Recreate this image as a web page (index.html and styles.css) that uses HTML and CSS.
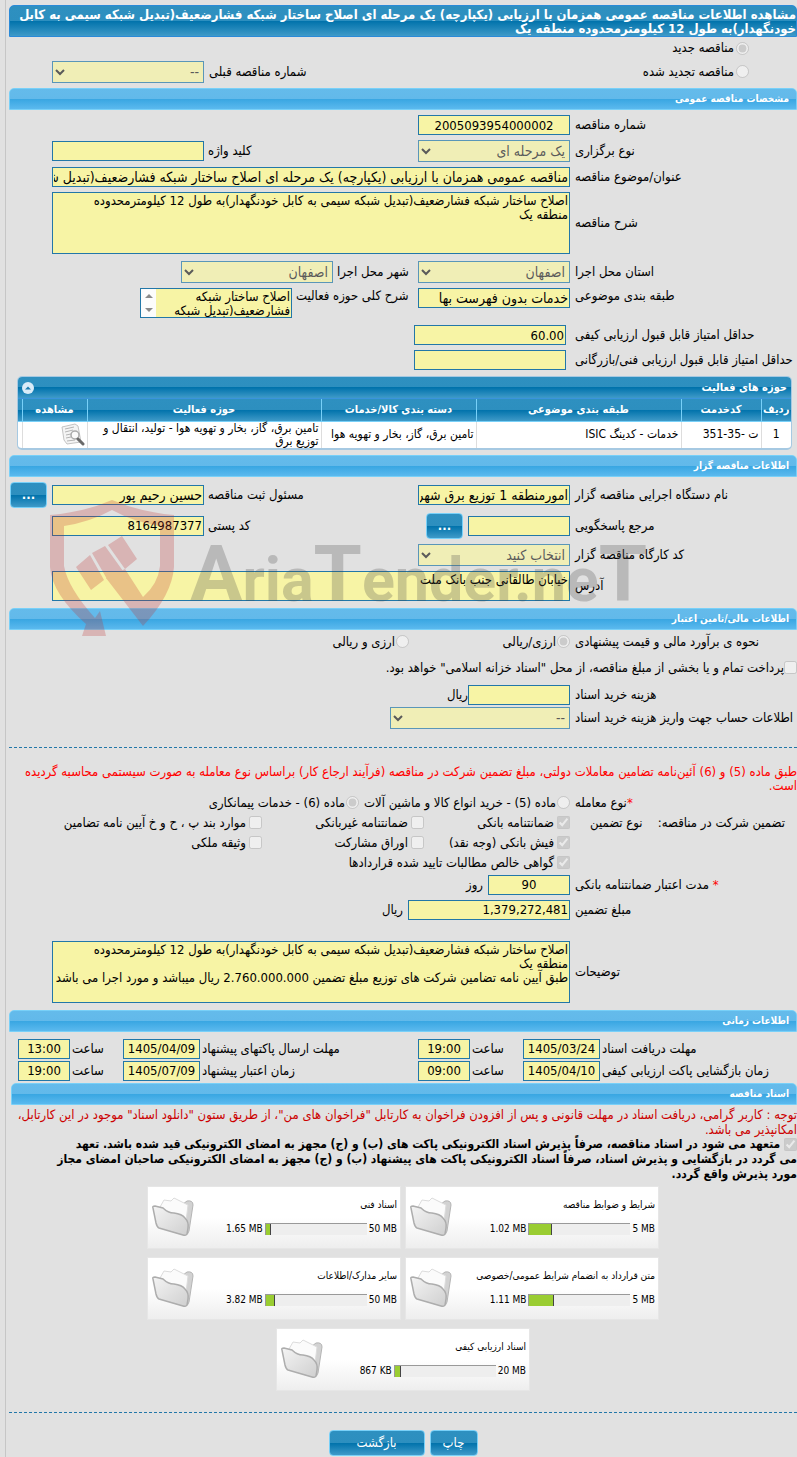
FILE: index.html
```html
<!DOCTYPE html>
<html lang="fa" dir="rtl">
<head>
    <meta charset="UTF-8">
    <meta name="viewport" content="width=device-width, initial-scale=1.0">
    <title>مشاهده اطلاعات مناقصه عمومی</title>
    <link rel="stylesheet" href="styles.css">
</head>
<body>
    <svg width="0" height="0" class="defs">
        <defs>
            <linearGradient id="flap" x1="0" y1="0" x2="1" y2="1">
                <stop offset="0" stop-color="#f4f4f4"/>
                <stop offset="1" stop-color="#cfcfcf"/>
            </linearGradient>
            <symbol id="folder" viewBox="0 0 44 40">
                <path d="M20 12 L32 7 L36 4 Q42 3 42 8 L38 34 Q37 38 34 38 L30 30 Z" fill="#d2d2d2" stroke="#b5b5b5"/>
                <path d="M9 10 L13 3 L20 4 L23 1 L37 8 L34 33 L13 28 Z" fill="#fbfbfb" stroke="#dcdcdc"/>
                <path d="M2 11 Q1 9 4 9 L12 11 Q17 16 23 16 Q31 17 34 21 Q38 25 37 31 L36 37 Q35 39 32 38 L8 31 Q6 30 5 26 Z" fill="url(#flap)" stroke="#adadad" stroke-width="1.500"/>
            </symbol>
        </defs>
    </svg>

    <main class="page">
        <h1 class="page-title">مشاهده اطلاعات مناقصه عمومی همزمان با ارزیابی (یکپارچه) یک مرحله ای اصلاح ساختار شبکه فشارضعیف(تبدیل شبکه سیمی به کابل<br>خودنگهدار)به طول 12 کیلومترمحدوده منطقه یک</h1>

        <div class="row kind">
            <input type="radio" id="kindNew" name="kind" checked disabled><label for="kindNew">مناقصه جدید</label>
        </div>
        <div class="row kind">
            <div class="kind-cell"><input type="radio" id="kindRenew" name="kind" disabled><label for="kindRenew">مناقصه تجدید شده</label></div>
            <label class="lbl2" for="prevNo">شماره مناقصه قبلی</label>
            <select id="prevNo" class="field" disabled><option>--</option></select>
        </div>

        <h2 class="bar">مشخصات مناقصه عمومی</h2>
        <div class="row">
            <label class="lbl" for="tenderNo">شماره مناقصه</label>
            <input type="text" id="tenderNo" class="field center" value="2005093954000002" readonly>
        </div>
        <div class="row">
            <label class="lbl" for="holdType">نوع برگزاری</label>
            <select id="holdType" class="field" disabled><option>یک مرحله ای</option></select>
            <label class="lbl2" for="keyword">کلید واژه</label>
            <input type="text" id="keyword" class="field" readonly>
        </div>
        <div class="row">
            <label class="lbl" for="subject">عنوان/موضوع مناقصه</label>
            <input type="text" id="subject" class="wide fa" value="مناقصه عمومی همزمان با ارزیابی (یکپارچه) یک مرحله ای اصلاح ساختار شبکه فشارضعیف(تبدیل شبکه سیمی به کابل خودنگهدار)" readonly>
        </div>
        <div class="row after-area">
            <label class="lbl" for="desc">شرح مناقصه</label>
            <textarea id="desc" class="wide tall" readonly>اصلاح ساختار شبکه فشارضعیف(تبدیل شبکه سیمی به کابل خودنگهدار)به طول 12 کیلومترمحدوده
منطقه یک</textarea>
        </div>
        <div class="row">
            <label class="lbl" for="province">استان محل اجرا</label>
            <select id="province" class="field" disabled><option>اصفهان</option></select>
            <label class="lbl2 city-label" for="city">شهر محل اجرا</label>
            <select id="city" class="field" disabled><option>اصفهان</option></select>
        </div>
        <div class="row top after-area">
            <label class="lbl" for="category">طبقه بندی موضوعی</label>
            <input type="text" id="category" class="field fa" value="خدمات بدون فهرست بها" readonly>
            <label class="lbl2 scope-label" for="scope">شرح کلی حوزه فعالیت</label>
            <div class="field scroll-box">
                <textarea id="scope" readonly>اصلاح ساختار شبکه
فشارضعیف(تبدیل شبکه
سیمی به کابل خودنگهدار)</textarea>
                <svg width="15" height="28" viewBox="0 0 15 28"><rect width="15" height="28" fill="#fcfcfc"/><path d="M4 9 L8 5 L12 9 Z M4 19 L8 23 L12 19 Z" fill="#8a8a8a"/></svg>
            </div>
        </div>
        <div class="row score">
            <label class="lbl" for="minQuality">حداقل امتیاز قابل قبول ارزیابی کیفی</label>
            <input type="text" id="minQuality" class="field" value="60.00" readonly>
        </div>
        <div class="row score">
            <label class="lbl" for="minTech">حداقل امتیاز قابل قبول ارزیابی فنی/بازرگانی</label>
            <input type="text" id="minTech" class="field" readonly>
        </div>

        <div class="grid-box">
            <div class="grid-title">
                <span>حوزه های فعالیت</span>
                <svg width="12" height="12" viewBox="0 0 12 12"><circle cx="6" cy="6" r="6" fill="#d9ebf8"/><path d="M3 7.500 L6 4.500 L9 7.500 Z" fill="#1a7cb0"/></svg>
            </div>
            <table>
                <colgroup><col class="c-no"><col class="c-code"><col class="c-cat"><col class="c-goods"><col class="c-area"><col class="c-view"><col class="c-pad"></colgroup>
                <thead>
                    <tr><th>ردیف</th><th>کدخدمت</th><th>طبقه بندی موضوعی</th><th>دسته بندی کالا/خدمات</th><th>حوزه فعالیت</th><th>مشاهده</th><th></th></tr>
                </thead>
                <tbody>
                    <tr>
                        <td class="center">1</td>
                        <td>ت -35-351</td>
                        <td>خدمات - کدینگ ISIC</td>
                        <td>تامین برق، گاز، بخار و تهویه هوا</td>
                        <td>تامین برق، گاز، بخار و تهویه هوا - تولید، انتقال و توزیع برق</td>
                        <td><svg class="view" width="24" height="24" viewBox="0 0 24 24">
                            <path d="M1 4 L14 1 L17 3 L20 19 L6 21 L3 17 Z" fill="#f4f4f4" stroke="#c4c4c4"/>
                            <path d="M4 6 L13 4 M4 9 L12 7 M5 12 L10 11 M5 15 L10 14 M6 18 L14 17" stroke="#b4b4b4"/>
                            <circle cx="14" cy="12" r="4" fill="#fafafa" stroke="#aaa" stroke-width="1.500"/>
                            <path d="M17 16 L22 21" stroke="#6a6a6a" stroke-width="3" stroke-linecap="round"/>
                        </svg></td>
                        <td></td>
                    </tr>
                </tbody>
            </table>
        </div>

        <h2 class="bar">اطلاعات مناقصه گزار</h2>
        <section class="owner">
            <div class="row">
                <label class="lbl" for="org">نام دستگاه اجرایی مناقصه گزار</label>
                <input type="text" id="org" class="field fa" value="امورمنطقه 1 توزیع برق شهرستان" readonly>
                <label class="lbl2" for="registrar">مسئول ثبت مناقصه</label>
                <input type="text" id="registrar" class="field fa" value="حسین رحیم پور" readonly>
                <button type="button" class="btn dots">...</button>
            </div>
            <div class="row">
                <label class="lbl" for="contact">مرجع پاسخگویی</label>
                <div class="field contact"><input type="text" id="contact" readonly><button type="button" class="btn dots">...</button></div>
                <label class="lbl2" for="postal">کد پستی</label>
                <input type="text" id="postal" class="field" value="8164987377" readonly>
            </div>
            <div class="row">
                <label class="lbl" for="workshop">کد کارگاه مناقصه گزار</label>
                <select id="workshop" class="field" disabled><option>انتخاب کنید</option></select>
            </div>
            <div class="row after-area">
                <label class="lbl" for="address">آدرس</label>
                <textarea id="address" class="wide short" readonly>خیابان طالقانی جنب بانک ملت</textarea>
            </div>
            <svg class="watermark" viewBox="0 0 610 140" direction="ltr">
                <g fill="#c03030">
                    <path d="M0 15 Q35 12 62 0 Q90 12 124 15 V67 Q122 95 93 126 L56 78 L75 69 L93 97 Q108 84 110 66 V26 Q84 22 62 10 Q40 22 14 26 V66 Q18 88 45 118 L50 111 L56 136 L32 136 L36 124 Q2 94 0 67 Z"/>
                    <path d="M26 67 L40 55 L54 80 L41 90 Z M42 53 L55 46 L73 71 L57 79 Z M58 45 L72 36 L87 59 L75 69 Z"/>
                </g>
                <text x="140" y="101">A<tspan class="small">ria</tspan>T<tspan class="small">ender.ne</tspan>T</text>
            </svg>
        </section>

        <h2 class="bar">اطلاعات مالی/تامین اعتبار</h2>
        <div class="row estimate">
            <span class="lbl">نحوه ی برآورد مالی و قیمت پیشنهادی</span>
            <span class="opt c1"><input type="radio" id="curOr" name="cur" checked disabled><label for="curOr">ارزی/ریالی</label></span>
            <span class="opt"><input type="radio" id="curAnd" name="cur" disabled><label for="curAnd">ارزی و ریالی</label></span>
        </div>
        <div class="row bonds">
            <input type="checkbox" id="bonds" disabled><label for="bonds">پرداخت تمام و یا بخشی از مبلغ مناقصه، از محل "اسناد خزانه اسلامی" خواهد بود.</label>
        </div>
        <div class="row fee">
            <label class="lbl" for="fee">هزینه خرید اسناد</label>
            <span class="unit-box"><input type="text" id="fee" class="w102" readonly>ریال</span>
        </div>
        <div class="row account">
            <label class="lbl" for="account">اطلاعات حساب جهت واریز هزینه خرید اسناد</label>
            <select id="account" class="w180" disabled><option>--</option></select>
        </div>
        <hr>

        <p class="note">طبق ماده (5) و (6) آئین‌نامه تضامین معاملات دولتی، مبلغ تضمین شرکت در مناقصه (فرآیند ارجاع کار) براساس نوع معامله به صورت سیستمی محاسبه گردیده<br>است.</p>
        <div class="row deal">
            <span class="lbl"><span class="req">*</span>نوع معامله</span>
            <span class="opt"><input type="radio" id="deal5" name="deal" disabled><label for="deal5">ماده (5) - خرید انواع کالا و ماشین آلات</label></span>
            <span class="opt"><input type="radio" id="deal6" name="deal" checked disabled><label for="deal6">ماده (6) - خدمات پیمانکاری</label></span>
        </div>
        <div class="row guar">
            <span class="lbl split"><span>تضمین شرکت در مناقصه:</span><span>نوع تضمین</span></span>
            <span class="opt c1"><input type="checkbox" id="g1" checked disabled><label for="g1">ضمانتنامه بانکی</label></span>
            <span class="opt c2"><input type="checkbox" id="g2" disabled><label for="g2">ضمانتنامه غیربانکی</label></span>
            <span class="opt"><input type="checkbox" id="g3" disabled><label for="g3">موارد بند پ ، ح و خ آیین نامه تضامین</label></span>
        </div>
        <div class="row guar">
            <span class="lbl"></span>
            <span class="opt c1"><input type="checkbox" id="g4" checked disabled><label for="g4">فیش بانکی (وجه نقد)</label></span>
            <span class="opt c2"><input type="checkbox" id="g5" disabled><label for="g5">اوراق مشارکت</label></span>
            <span class="opt"><input type="checkbox" id="g6" disabled><label for="g6">وثیقه ملکی</label></span>
        </div>
        <div class="row guar">
            <span class="lbl"></span>
            <span class="opt"><input type="checkbox" id="g7" checked disabled><label for="g7">گواهی خالص مطالبات تایید شده قراردادها</label></span>
        </div>
        <div class="row">
            <label class="lbl" for="days"><span class="req">*</span> مدت اعتبار ضمانتنامه بانکی</label>
            <input type="text" id="days" class="w82 center" value="90" readonly><span>روز</span>
        </div>
        <div class="row">
            <label class="lbl" for="amount">مبلغ تضمین</label>
            <input type="text" id="amount" class="w162" value="1,379,272,481" readonly><span>ریال</span>
        </div>
        <div class="row notes after-area">
            <label class="lbl" for="remarks">توضیحات</label>
            <textarea id="remarks" class="wide tall" readonly>اصلاح ساختار شبکه فشارضعیف(تبدیل شبکه سیمی به کابل خودنگهدار)به طول 12 کیلومترمحدوده
منطقه یک
طبق آیین نامه تضامین شرکت های توزیع مبلغ تضمین 2.760.000.000 ریال میباشد و مورد اجرا می باشد</textarea>
        </div>

        <h2 class="bar">اطلاعات زمانی</h2>
        <div class="times">
            <label for="d1">مهلت دریافت اسناد</label><input type="text" id="d1" value="1405/03/24" readonly>
            <label for="t1">ساعت</label><input type="text" id="t1" value="19:00" readonly>
            <label for="d2">مهلت ارسال پاکتهای پیشنهاد</label><input type="text" id="d2" value="1405/04/09" readonly>
            <label for="t2">ساعت</label><input type="text" id="t2" value="13:00" readonly>
            <label for="d3">زمان بازگشایی پاکت ارزیابی کیفی</label><input type="text" id="d3" value="1405/04/10" readonly>
            <label for="t3">ساعت</label><input type="text" id="t3" value="09:00" readonly>
            <label for="d4">زمان اعتبار پیشنهاد</label><input type="text" id="d4" value="1405/07/09" readonly>
            <label for="t4">ساعت</label><input type="text" id="t4" value="19:00" readonly>
        </div>

        <h2 class="bar docs-bar">اسناد مناقصه</h2>
        <p class="warn">توجه : کاربر گرامی، دریافت اسناد در مهلت قانونی و پس از افزودن فراخوان به کارتابل "فراخوان های من"، از طریق ستون "دانلود اسناد" موجود در این کارتابل،<br>امکانپذیر می باشد.</p>
        <p class="pledge"><input type="checkbox" id="pledge" checked disabled> <label for="pledge">متعهد می شود در اسناد مناقصه، صرفاً پذیرش اسناد الکترونیکی پاکت های (ب) و (ج) مجهز به امضای الکترونیکی قید شده باشد. تعهد<br>می گردد در بازگشایی و پذیرش اسناد، صرفاً اسناد الکترونیکی پاکت های پیشنهاد (ب) و (ج) مجهز به امضای الکترونیکی صاحبان امضای مجاز<br>مورد پذیرش واقع گردد.</label></p>

        <div class="docs">
            <div class="doc">
                <div class="doc-info"><span>شرایط و ضوابط مناقصه</span>
                    <div class="size"><span>5 MB</span><div class="meter"><i style="width:22%"></i></div><span>1.02 MB</span></div></div>
                <svg width="44" height="40"><use href="#folder"/></svg>
            </div>
            <div class="doc">
                <div class="doc-info"><span>اسناد فنی</span>
                    <div class="size"><span>50 MB</span><div class="meter"><i style="width:5%"></i></div><span>1.65 MB</span></div></div>
                <svg width="44" height="40"><use href="#folder"/></svg>
            </div>
            <div class="doc">
                <div class="doc-info"><span>متن قرارداد به انضمام شرایط عمومی/خصوصی</span>
                    <div class="size"><span>5 MB</span><div class="meter"><i style="width:24%"></i></div><span>1.11 MB</span></div></div>
                <svg width="44" height="40"><use href="#folder"/></svg>
            </div>
            <div class="doc">
                <div class="doc-info"><span>سایر مدارک/اطلاعات</span>
                    <div class="size"><span>50 MB</span><div class="meter"><i style="width:9%"></i></div><span>3.82 MB</span></div></div>
                <svg width="44" height="40"><use href="#folder"/></svg>
            </div>
            <div class="doc">
                <div class="doc-info"><span>اسناد ارزیابی کیفی</span>
                    <div class="size"><span>20 MB</span><div class="meter"><i style="width:6%"></i></div><span>867 KB</span></div></div>
                <svg width="44" height="40"><use href="#folder"/></svg>
            </div>
        </div>
        <hr>
        <div class="actions">
            <button type="button" class="btn">چاپ</button>
            <button type="button" class="btn back">بازگشت</button>
        </div>
    </main>
</body>
</html>
```
FILE: styles.css
```css
* { box-sizing: border-box; }
body { margin: 0; background: #e1e1e1; color: #000; font: 13px/14px Tahoma, "DejaVu Sans Condensed", "DejaVu Sans", sans-serif; overflow-x: hidden; }
.defs { position: absolute; }
.page { margin-left: 5px; padding: 5px 0 5px 3px; border-left: 1px solid #c6c6c6; }

.page-title { margin: 0; height: 32px; padding-top: 2px; border: 1px solid #2a8ad8; border-radius: 5px 5px 0 0; color: #fff; font-size: 13px; line-height: 14px; white-space: nowrap; background: linear-gradient(#2e90c0 0, #2d8fbf 50%, #0072ab 50%, #3f9ac8 100%); }
.bar { margin: 0 0 5px; height: 22px; padding: 0 7px; border: 1px solid #78d0f8; border-radius: 5px 5px 0 0; color: #fff; font-size: 10px; line-height: 20px; background: linear-gradient(#64bbeb 0, #62b9ea 50%, #38a6e2 50%, #5bb9ee 100%); }

input, select, textarea, button { font-family: inherit; margin: 0; }
input[type=text], select, textarea { border: 1px solid #2277a8; border-radius: 0; background: #f7f4a5; color: #000; font-size: 13px; outline: none; }
input[type=text] { height: 20px; padding: 0 1px; }
input[type=text].fa { font-size: 14px; }
select { height: 22px; }
select:disabled { color: #222; font-size: 14px; opacity: .7; }
textarea { display: block; padding: 1px; line-height: 14px; resize: none; overflow: hidden; }
input[type=radio], input[type=checkbox] { width: 13px; height: 13px; flex: none; }

.row { display: flex; align-items: center; gap: 5px; margin-bottom: 5px; }
.row.top { align-items: flex-start; }
.lbl { width: 222px; flex: none; text-align: left; white-space: nowrap; }
.lbl2 { width: 205px; flex: none; text-align: left; margin-left: -1px; white-space: nowrap; }
.field { width: 152px; flex: none; }
.wide { flex: 1; min-width: 0; margin-left: 43px; }
.tall { height: 62px; }
.short { height: 30px; }
.after-area { margin-bottom: 7px; }
.center { text-align: center; }
.city-label { width: 76px; }
.scope-label { width: 117px; }
.top label { padding-top: 1px; }
.scroll-box { display: flex; height: 30px; border: 1px solid #2277a8; }
.scroll-box textarea { flex: 1; min-width: 0; height: 28px; border: 0; }
.score .field { margin-right: 4px; }
.w82 { width: 82px; }
.w102 { width: 102px; }
.w162 { width: 162px; }
.w180 { width: 180px; }

.kind { padding-right: 48px; gap: 2px; min-height: 22px; margin-bottom: 2px; }
.kind-cell { display: flex; gap: 2px; width: 334px; }
.kind .lbl2 { width: 204px; margin-left: 3px; }
.kind + .bar { margin-top: 5px; }

.grid-box { margin: 6px 5px 5px 8px; border: 1px solid #a6c9e2; border-bottom-width: 2px; border-radius: 5px; background: #fff; overflow: hidden; }
.grid-title { display: flex; justify-content: space-between; align-items: center; height: 22px; padding: 0 4px; color: #fff; font-size: 11px; font-weight: bold; border-bottom: 1px solid #3a94dc; background: linear-gradient(#2e90c0 0, #2d8fbf 50%, #0072ab 50%, #3f9ac8 100%); }
table { width: 100%; border-collapse: collapse; table-layout: fixed; font-size: 12px; }
th { height: 22px; padding: 0; color: #fff; font-size: 11px; border-left: 1px solid #78d0f8; border-bottom: 1px solid #78d0f8; white-space: nowrap; }
thead { background: linear-gradient(#2e90c0 0, #2d8fbf 50%, #0072ab 50%, #3f9ac8 100%); }
td { height: 26px; padding: 0 2px; line-height: 13px; border-left: 1px solid #ddd; }
th:last-child, td:last-child { border-left: 0; }
.c-no { width: 30px; }
.c-code { width: 80px; }
.c-cat { width: 205px; }
.c-goods { width: 155px; }
.c-view { width: 65px; }
.c-pad { width: 4px; }
td:last-child, th:last-child { padding: 0; }
.view { display: block; }

.owner { position: relative; }
.owner .row { min-height: 20px; }
.contact { display: flex; align-items: center; gap: 5px; }
.contact input { width: 102px; }
.btn { height: 26px; min-width: 48px; padding: 0; border: 1px solid #78d0f8; border-radius: 4px; color: #fff; font-size: 13px; background: linear-gradient(#2e90c0 0, #2d8fbf 50%, #0072ab 50%, #3f9ac8 100%); }
.dots { width: 37px; min-width: 37px; font-weight: bold; flex: none; }
.back { width: 96px; }
.watermark { position: absolute; left: 41px; top: 18px; width: 610px; height: 140px; opacity: .25; pointer-events: none; }
.watermark text { font: bold 78px Roboto, "Liberation Sans", sans-serif; fill: #444; }
.watermark .small { font-size: 61px; }

.opt { display: flex; align-items: center; gap: 3px; white-space: nowrap; }
.opt.c1 { width: 141px; }
.opt.c2 { width: 157px; }
.estimate { height: 14px; margin: 5px 0 7px; }
.estimate .c1 { width: 156px; }
.estimate .opt, .deal .opt { gap: 1px; }
.bonds { height: 24px; gap: 0; }
.unit-box { display: flex; align-items: center; }
.fee { margin-bottom: 2px; }
hr { margin: 18px 0 17px; border: 0; border-top: 1px dashed #2277a8; }

.note { margin: 0; color: #f00; white-space: nowrap; }
.warn { margin: 0; color: #c00; line-height: 15px; white-space: nowrap; }
.req { color: #f00; }
.deal, .guar { height: 20px; margin-bottom: 0; }
.split { display: flex; justify-content: space-between; padding: 0 12px 0 15px; }
.guar + .row:not(.guar) { margin-top: 2px; }
.notes { margin-top: 21px; }

.times { display: grid; grid-template-columns: 1fr 77px 49px 52px 214px 77px 49px 52px; gap: 2px; align-items: center; margin: 7px 0 2px 9px; }
.times label { text-align: left; white-space: nowrap; }
.times input { width: 100%; text-align: center; }
.docs-bar { margin: 0 0 2px 2px; }
.pledge { margin: 0; font-size: 12px; font-weight: bold; line-height: 15px; white-space: nowrap; }
.pledge input { vertical-align: middle; }

.docs { display: flex; flex-wrap: wrap; justify-content: center; gap: 8px 4px; max-width: 518px; margin: 4px auto 21px; }
.doc { display: flex; justify-content: space-between; align-items: center; width: 254px; height: 63px; padding: 0 3px; border: 1px solid #e6e6e6; background: linear-gradient(#fff 50%, #eee); font-size: 10px; line-height: 12px; }
.doc-info { display: flex; flex-direction: column; gap: 12px; white-space: nowrap; }
.size { display: flex; align-items: center; gap: 2px; font-size: 10px; }
.meter { width: 102px; height: 12px; background: #eee; border-top: 1px solid #999; border-left: 1px solid #999; direction: ltr; }
.meter i { display: block; height: 100%; background: #9acd32; border-right: 1px solid #444; }
.size span { direction: ltr; }
.actions { display: flex; justify-content: center; gap: 5px; }
```
